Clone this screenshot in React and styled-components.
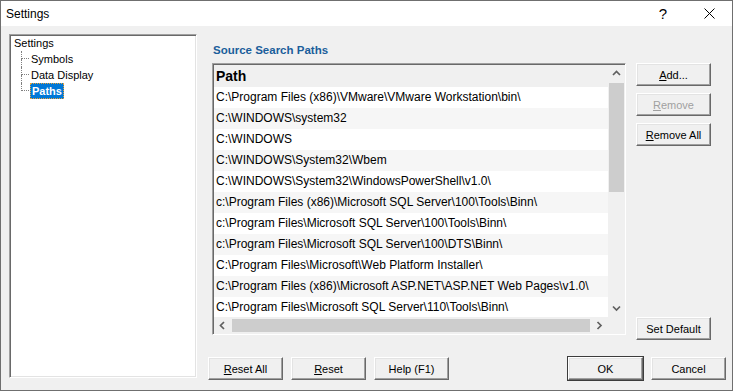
import React from "react";
import styled, { createGlobalStyle, css } from "styled-components";

const paths = [
  "C:\\Program Files (x86)\\VMware\\VMware Workstation\\bin\\",
  "C:\\WINDOWS\\system32",
  "C:\\WINDOWS",
  "C:\\WINDOWS\\System32\\Wbem",
  "C:\\WINDOWS\\System32\\WindowsPowerShell\\v1.0\\",
  "c:\\Program Files (x86)\\Microsoft SQL Server\\100\\Tools\\Binn\\",
  "c:\\Program Files\\Microsoft SQL Server\\100\\Tools\\Binn\\",
  "c:\\Program Files\\Microsoft SQL Server\\100\\DTS\\Binn\\",
  "C:\\Program Files\\Microsoft\\Web Platform Installer\\",
  "C:\\Program Files (x86)\\Microsoft ASP.NET\\ASP.NET Web Pages\\v1.0\\",
  "C:\\Program Files\\Microsoft SQL Server\\110\\Tools\\Binn\\",
];

const treeItems = ["Symbols", "Data Display", "Paths"];

const Chevron = ({ dir }) => {
  const d = {
    up: "M1 5 L4.5 1.5 L8 5",
    down: "M1 1.5 L4.5 5 L8 1.5",
    left: "M5 1 L1.5 4.5 L5 8",
    right: "M1.5 1 L5 4.5 L1.5 8",
  }[dir];
  const vertical = dir === "up" || dir === "down";
  return (
    <svg width={vertical ? 9 : 7} height={vertical ? 7 : 9} viewBox={vertical ? "0 0 9 7" : "0 0 7 9"}>
      <path d={d} fill="none" stroke="#606060" strokeWidth="1.7" />
    </svg>
  );
};

const App = () => {
  return (
    <>
      <GlobalStyle />
      <Window>
        <TitleBar>
          <Caption>Settings</Caption>
          <CaptionButton>?</CaptionButton>
          <CaptionButton>
            <svg width="11" height="11" viewBox="0 0 11 11">
              <path d="M0.5 0.5 L10.5 10.5 M10.5 0.5 L0.5 10.5" stroke="#000" strokeWidth="1" />
            </svg>
          </CaptionButton>
        </TitleBar>
        <Body>
          <TreePanel>
            <TreeRow>
              <TreeLabel>Settings</TreeLabel>
            </TreeRow>
            {treeItems.map((item, i) => (
              <TreeRow key={item}>
                <Connector $last={i === treeItems.length - 1} />
                <TreeLabel $selected={item === "Paths"}>{item}</TreeLabel>
              </TreeRow>
            ))}
          </TreePanel>

          <RightColumn>
            <Main>
              <ListSection>
                <Heading>Source Search Paths</Heading>
                <ListBox>
                  <ListContent>
                    <HeaderRow>Path</HeaderRow>
                    {paths.map((p, i) => (
                      <PathRow key={i} $alt={i % 2 === 1}>
                        {p}
                      </PathRow>
                    ))}
                  </ListContent>
                  <VScroll>
                    <ArrowBox>
                      <Chevron dir="up" />
                    </ArrowBox>
                    <VThumb />
                    <Spacer />
                    <ArrowBox>
                      <Chevron dir="down" />
                    </ArrowBox>
                  </VScroll>
                  <HScroll>
                    <ArrowBox $horizontal>
                      <Chevron dir="left" />
                    </ArrowBox>
                    <HThumb />
                    <ArrowBox $horizontal>
                      <Chevron dir="right" />
                    </ArrowBox>
                  </HScroll>
                  <Corner />
                </ListBox>
              </ListSection>

              <SideButtons>
                <Button>
                  <u>A</u>dd...
                </Button>
                <Button disabled>
                  <u>R</u>emove
                </Button>
                <Button>
                  <u>R</u>emove All
                </Button>
                <Button $pushDown>Set Default</Button>
              </SideButtons>
            </Main>

            <ButtonBar>
              <Button>
                <u>R</u>eset All
              </Button>
              <Button>
                <u>R</u>eset
              </Button>
              <Button>Help (F1)</Button>
              <Button $primary $pushRight>
                OK
              </Button>
              <Button>Cancel</Button>
            </ButtonBar>
          </RightColumn>
        </Body>
      </Window>
    </>
  );
};

const GlobalStyle = createGlobalStyle`
  html, body {
    margin: 0;
    padding: 0;
    background: #f0f0f0;
  }
  body {
    font-family: "Liberation Sans", Arial, sans-serif;
  }
`;

const sunken = css`
  box-sizing: border-box;
  border: 1px solid;
  border-color: #a0a0a0 #ffffff #ffffff #a0a0a0;
  box-shadow: inset 1px 1px 0 #696969, inset -1px -1px 0 #e3e3e3;
`;

const Window = styled.div`
  width: 733px;
  height: 391px;
  box-sizing: border-box;
  border: 1px solid #6f6f6f;
  display: flex;
  flex-direction: column;
  background: #f0f0f0;
  overflow: hidden;
`;

const TitleBar = styled.div`
  height: 25px;
  flex-shrink: 0;
  display: flex;
  align-items: center;
  background: #ffffff;
`;

const Caption = styled.div`
  flex: 1;
  padding-left: 5px;
  font-size: 12px;
  color: #000;
`;

const CaptionButton = styled.div`
  width: 46px;
  height: 25px;
  display: flex;
  align-items: center;
  justify-content: center;
  font-size: 15px;
  color: #000;
`;

const Body = styled.div`
  flex: 1;
  display: flex;
  gap: 11px;
  padding: 8px 6px 10px 8px;
  min-height: 0;
`;

const TreePanel = styled.div`
  ${sunken};
  width: 188px;
  height: 344px;
  flex-shrink: 0;
  background: #ffffff;
  padding-left: 2px;
  font-size: 11px;
`;

const TreeRow = styled.div`
  height: 16px;
  display: flex;
  align-items: center;
`;

const Connector = styled.span`
  width: 8px;
  height: 16px;
  margin-left: 9px;
  flex-shrink: 0;
  display: flex;
  flex-direction: column;

  &::before {
    content: "";
    height: 8px;
    box-sizing: border-box;
    border-left: 1px dotted #808080;
    border-bottom: 1px dotted #808080;
  }
  &::after {
    content: "";
    flex: 1;
    border-left: ${(p) => (p.$last ? "none" : "1px dotted #808080")};
  }
`;

const TreeLabel = styled.span`
  height: 16px;
  line-height: 16px;
  margin-left: 2px;
  color: #000;
  white-space: nowrap;

  ${(p) =>
    p.$selected &&
    css`
      box-sizing: border-box;
      margin-left: 1px;
      padding: 0 1px;
      line-height: 14px;
      border: 1px dotted #e8a33a;
      background: #0078d7;
      color: #ffffff;
      font-weight: bold;
    `}
`;

const RightColumn = styled.div`
  flex: 1;
  display: flex;
  flex-direction: column;
`;

const Main = styled.div`
  display: flex;
  gap: 10px;
  margin-top: 9px;
  padding-left: 4px;
`;

const ListSection = styled.div`
  display: flex;
  flex-direction: column;
`;

const Heading = styled.div`
  height: 14px;
  line-height: 14px;
  margin-bottom: 6px;
  padding-left: 1px;
  font-size: 11.5px;
  font-weight: bold;
  color: #1b5e9b;
`;

const ListBox = styled.div`
  ${sunken};
  width: 414px;
  height: 272px;
  padding: 1px 0 0 1px;
  display: grid;
  grid-template-columns: 1fr 17px;
  grid-template-rows: 1fr 17px;
  background: #ffffff;
  overflow: hidden;
`;

const ListContent = styled.div`
  overflow: hidden;
  min-width: 0;
  min-height: 0;
`;

const HeaderRow = styled.div`
  height: 22px;
  line-height: 22px;
  padding-left: 2px;
  background: #f0f0f0;
  font-size: 14px;
  font-weight: bold;
  color: #000;
`;

const PathRow = styled.div`
  height: 21px;
  line-height: 21px;
  padding-left: 2px;
  font-size: 12px;
  color: #000;
  white-space: nowrap;
  background: ${(p) => (p.$alt ? "#f6f6f6" : "#ffffff")};
`;

const VScroll = styled.div`
  background: #f0f0f0;
  display: flex;
  flex-direction: column;
  align-items: center;
`;

const ArrowBox = styled.div`
  width: ${(p) => (p.$horizontal ? "17px" : "100%")};
  height: ${(p) => (p.$horizontal ? "100%" : "17px")};
  flex-shrink: 0;
  display: flex;
  align-items: center;
  justify-content: center;
`;

const VThumb = styled.div`
  width: 15px;
  height: 109px;
  margin-top: 1px;
  background: #cdcdcd;
`;

const Spacer = styled.div`
  flex: 1;
`;

const HScroll = styled.div`
  background: #f0f0f0;
  display: flex;
  align-items: center;
`;

const HThumb = styled.div`
  height: 13px;
  width: 358px;
  margin-left: 1px;
  margin-right: auto;
  background: #cdcdcd;
`;

const Corner = styled.div`
  background: #f0f0f0;
`;

const SideButtons = styled.div`
  height: 297px;
  padding-top: 20px;
  box-sizing: border-box;
  display: flex;
  flex-direction: column;
  gap: 7px;
`;

const Button = styled.button`
  width: 75px;
  height: 23px;
  flex-shrink: 0;
  box-sizing: border-box;
  padding: 0;
  font-family: "Liberation Sans", Arial, sans-serif;
  font-size: 11px;
  color: ${(p) => (p.disabled ? "#a0a0a0" : "#000000")};
  background: #f0f0f0;
  border: 1px solid;
  border-color: #ffffff #696969 #696969 #ffffff;
  box-shadow: inset -1px -1px 0 #a0a0a0, inset 1px 1px 0 #e3e3e3;
  margin-top: ${(p) => (p.$pushDown ? "auto" : "0")};
  margin-left: ${(p) => (p.$pushRight ? "auto" : "0")};

  ${(p) =>
    p.$primary &&
    css`
      outline: 1px solid #3c3c3c;
      outline-offset: 0;
    `}

  u {
    text-decoration: underline;
    text-underline-offset: 1px;
  }
`;

const ButtonBar = styled.div`
  margin-top: auto;
  display: flex;
  gap: 8px;
`;

export default App;
